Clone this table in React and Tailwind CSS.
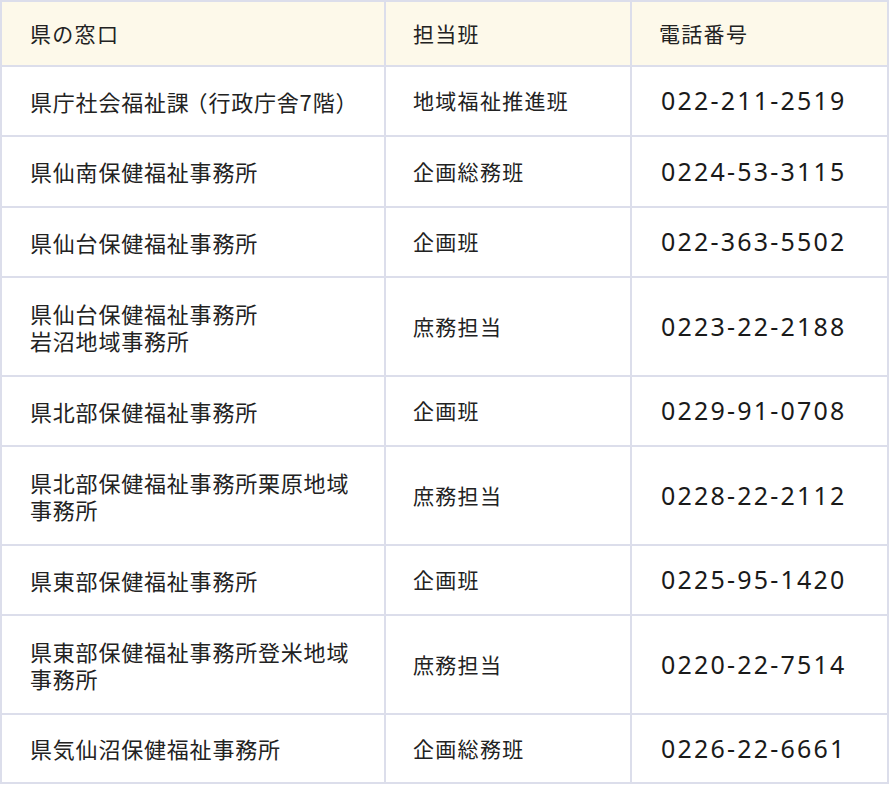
import React from "react";

const rows = [
  {
    h: "h-[70px]",
    name: [
      <>
        県庁社会福祉課<span className="ml-[-4px]">（</span>行政庁舎7階）
      </>,
    ],
    team: "地域福祉推進班",
    tel: "022-211-2519",
  },
  { h: "h-[71px]", name: ["県仙南保健福祉事務所"], team: "企画総務班", tel: "0224-53-3115" },
  { h: "h-[70px]", name: ["県仙台保健福祉事務所"], team: "企画班", tel: "022-363-5502" },
  { h: "h-[99px]", name: ["県仙台保健福祉事務所", "岩沼地域事務所"], team: "庶務担当", tel: "0223-22-2188" },
  { h: "h-[70px]", name: ["県北部保健福祉事務所"], team: "企画班", tel: "0229-91-0708" },
  { h: "h-[99px]", name: ["県北部保健福祉事務所栗原地域", "事務所"], team: "庶務担当", tel: "0228-22-2112" },
  { h: "h-[70px]", name: ["県東部保健福祉事務所"], team: "企画班", tel: "0225-95-1420" },
  { h: "h-[99px]", name: ["県東部保健福祉事務所登米地域", "事務所"], team: "庶務担当", tel: "0220-22-7514" },
  { h: "h-[69px]", name: ["県気仙沼保健福祉事務所"], team: "企画総務班", tel: "0226-22-6661" },
];

const jp = "font-['Noto_Sans_CJK_JP','Noto_Sans',sans-serif]";

export default function App() {
  return (
    <div className="w-[890px] h-[785px] bg-white">
      <div className={`w-[889px] border-t-2 border-l-2 border-[#dcdeeb] text-[#222] ${jp}`}>
        <div className="flex h-[65px] bg-[#fdf9ea]">
          <div className="w-[384px] flex items-center pl-[28px] border-r-2 border-b-2 border-[#dcdeeb] text-[21px] tracking-[1.3px]">
            県の窓口
          </div>
          <div className="w-[246px] flex items-center pl-[27px] border-r-2 border-b-2 border-[#dcdeeb] text-[21px] tracking-[1.3px]">
            担当班
          </div>
          <div className="w-[257px] flex items-center pl-[27px] border-r-2 border-b-2 border-[#dcdeeb] text-[21px] tracking-[1.3px]">
            電話番号
          </div>
        </div>
        {rows.map((r, i) => (
          <div key={i} className={`flex ${r.h}`}>
            <div className="w-[384px] flex flex-col justify-center pl-[28px] border-r-2 border-b-2 border-[#dcdeeb] text-[22px] leading-[27px] tracking-[0.8px]">
              {r.name.map((n, j) => (
                <div key={j}>{n}</div>
              ))}
            </div>
            <div className="w-[246px] flex items-center pl-[27px] border-r-2 border-b-2 border-[#dcdeeb] text-[21px] tracking-[1.3px]">
              {r.team}
            </div>
            <div className="w-[257px] flex items-center pl-[29px] border-r-2 border-b-2 border-[#dcdeeb] font-['Noto_Sans',sans-serif] text-[25px] tracking-[2.2px] text-[#1a1a1a]">
              {r.tel}
            </div>
          </div>
        ))}
      </div>
    </div>
  );
}
